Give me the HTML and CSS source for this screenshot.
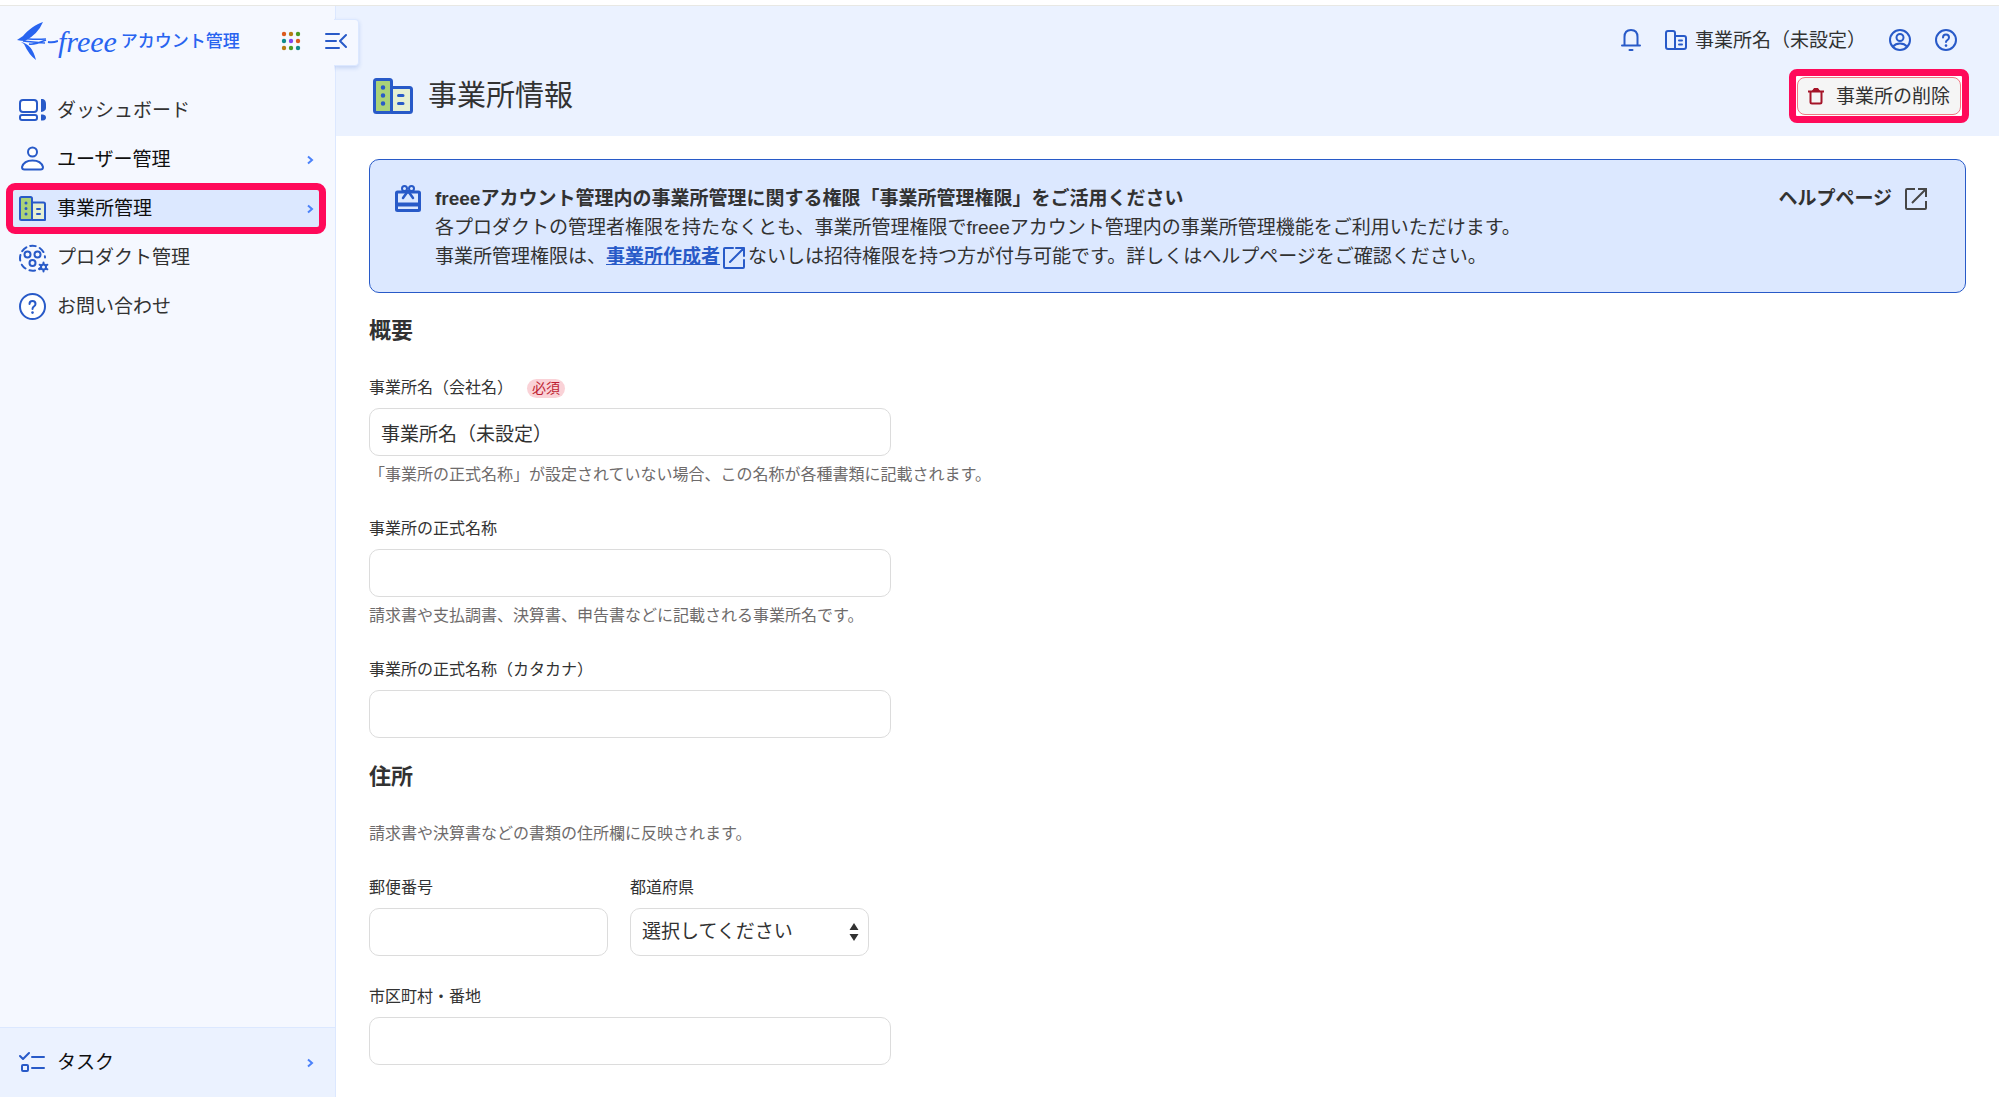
FILE: index.html
```html
<!DOCTYPE html>
<html lang="ja">
<head>
<meta charset="UTF-8">
<meta name="viewport" content="width=device-width, initial-scale=1">
<title>事業所情報 | freee アカウント管理</title>
<link rel="stylesheet" href="styles.css">
</head>
<body>
<div class="app">

<aside class="sidebar">
	<div class="brand">
		<a class="logo" href="#">
			<svg width="42" height="40" viewBox="0 0 42 40" aria-hidden="true">
				<path d="M27 1C20 3 12 9 7 15L1 19Q5 20 9 20Q22 13 27 1Z" fill="#2864f0"/>
				<path d="M5 21Q16 23 20 39Q13 34 8 23Z" fill="#2864f0"/>
				<path d="M7 17Q15 19 30 18M7 20Q16 21 29 22M13 23Q18 24 30 19" fill="none" stroke="#2864f0" stroke-width="1.5"/>
				<path d="M32 21Q37 22 42 20" fill="none" stroke="#2864f0" stroke-width="2"/>
			</svg>
			<span class="logo-word">freee</span>
			<span class="logo-name">アカウント管理</span>
		</a>
		<button class="icon-button apps" aria-label="アプリ一覧">
			<svg width="20" height="20" viewBox="0 0 20 20">
				<g fill="#dc5a1e"><circle cx="3" cy="3" r="2.2"/><circle cx="17" cy="10" r="2.2"/></g>
				<g fill="#b47d14"><circle cx="10" cy="3" r="2.2"/><circle cx="3" cy="17" r="2.2"/></g>
				<g fill="#4b9b23"><circle cx="17" cy="3" r="2.2"/><circle cx="10" cy="17" r="2.2"/></g>
				<g fill="#0f8c8c"><circle cx="3" cy="10" r="2.2"/><circle cx="17" cy="17" r="2.2"/></g>
				<circle cx="10" cy="10" r="2.2" fill="#8246f0"/>
			</svg>
		</button>
		<button class="icon-button toggle" aria-label="メニューを閉じる">
			<svg class="line" width="22" height="18" viewBox="0 0 22 18">
				<path d="M1 2H14M1 9H11M1 16H14M21 3L15 9L21 15"/>
			</svg>
		</button>
	</div>

	<nav class="menu">
		<a class="menu-item" href="#">
			<svg class="line" width="27" height="27" viewBox="0 0 27 27">
				<rect x="1" y="3" width="17" height="12" rx="3" fill="#fff"/>
				<rect x="1" y="18" width="17" height="5" rx="2" fill="#fff"/>
				<path class="solid" d="M22 2H24Q27 3 27 7V11Q27 14 22 15ZM22 17.500H24Q27 18 27 20.500T24 23.500H22Z"/>
			</svg>
			<span>ダッシュボード</span>
		</a>
		<a class="menu-item parent" href="#">
			<svg class="line" width="27" height="27" viewBox="0 0 27 27">
				<circle cx="13.500" cy="6" r="4.500" fill="#fff"/>
				<path d="M5.500 23.500H21.500Q24 23.500 24 21Q22 14.500 13.500 14.500T3 21Q3 23.500 5.500 23.500Z" fill="#fff"/>
			</svg>
			<span>ユーザー管理</span>
			<svg class="chevron" width="8" height="10" viewBox="0 0 8 10"><path d="M2 1.500L6 5L2 8.500"/></svg>
		</a>
		<a class="menu-item parent active" href="#">
			<svg class="line" width="27" height="27" viewBox="0 0 27 27">
				<rect x="1" y="2" width="12" height="23" rx="1.500" fill="#aad278"/>
				<path d="M13 7.500H24.500Q26 7.500 26 9V25H13Z" fill="#e6f0d2"/>
				<path d="M18 14H21M18 19H21"/>
				<path d="M7 8V8.100M7 13.500V13.600M7 19V19.100" stroke-width="3"/>
			</svg>
			<span>事業所管理</span>
			<svg class="chevron" width="8" height="10" viewBox="0 0 8 10"><path d="M2 1.500L6 5L2 8.500"/></svg>
		</a>
		<a class="menu-item" href="#">
			<svg class="line products" width="27" height="27" viewBox="0 0 27 27">
				<path d="M24 21A12.500 12.500 0 1 1 26 13.500" stroke-dasharray="5.500 4.300"/>
				<circle cx="8.500" cy="10.500" r="3"/>
				<circle cx="18.500" cy="10.500" r="3"/>
				<circle cx="13.500" cy="19" r="3"/>
				<path d="M24.500 18.500V27.500M20.600 20.700L28.400 25.300M28.400 20.700L20.600 25.300"/>
				<circle cx="24.500" cy="23" r="2.500" fill="#f5f8ff"/>
			</svg>
			<span>プロダクト管理</span>
		</a>
		<a class="menu-item" href="#">
			<svg class="line" width="27" height="27" viewBox="0 0 27 27">
				<circle cx="13.500" cy="13.500" r="12.500" fill="#fff"/>
				<path d="M10.500 11Q10.500 8 13.500 8T16.500 11Q16.500 12.500 15 13.300T13.500 16"/>
				<path d="M13.500 19.500V19.600" stroke-width="2.600"/>
			</svg>
			<span>お問い合わせ</span>
		</a>
	</nav>

	<a class="tasks parent" href="#">
		<svg class="line" width="27" height="27" viewBox="0 0 27 27">
			<path d="M1 7L4 10L10 4M13 8H25M13 19H25"/>
			<rect x="3" y="16" width="6" height="6" rx="1"/>
		</svg>
		<span>タスク</span>
		<svg class="chevron" width="8" height="10" viewBox="0 0 8 10"><path d="M2 1.500L6 5L2 8.500"/></svg>
	</a>
</aside>

<div class="page">
	<header class="page-header">
		<div class="topbar">
			<button class="icon-button" aria-label="お知らせ">
				<svg class="line" width="22" height="22" viewBox="0 0 22 22">
					<path d="M2 16.500H20M4.500 16.500V8Q4.500 1 11 1T17.500 8V16.500"/>
					<path d="M9.500 21H12.500"/>
				</svg>
			</button>
			<button class="office">
				<svg class="line" width="22" height="22" viewBox="0 0 22 22">
					<path d="M11 20H3Q1 20 1 18V4Q1 2 3 2H8Q10 2 10 4V20H19Q21 20 21 18V9Q21 7 19 7H10M14 11.500H17M14 15.500H17"/>
				</svg>
				<span>事業所名（未設定）</span>
			</button>
			<div class="topbar-icons">
				<button class="icon-button" aria-label="アカウント">
					<svg class="line" width="22" height="22" viewBox="0 0 22 22">
						<circle cx="11" cy="11" r="10"/>
						<circle cx="11" cy="8.500" r="3.500"/>
						<path d="M4 17.500Q6.500 14.500 11 14.500T18 17.500"/>
					</svg>
				</button>
				<button class="icon-button" aria-label="ヘルプ">
					<svg class="line" width="22" height="22" viewBox="0 0 22 22">
						<circle cx="11" cy="11" r="10"/>
						<path d="M8 8.500Q8 5.500 11 5.500T14 8.500Q14 10 12.500 11T11 13"/>
						<path d="M11 16.500V16.600" stroke-width="2.600"/>
					</svg>
				</button>
			</div>
		</div>
		<div class="title-row">
			<svg class="line title-icon" width="40" height="36" viewBox="0 0 40 36">
				<rect x="1.500" y="1.500" width="17" height="33" rx="2" fill="#aad278"/>
				<path d="M18.500 9.500H36.500Q38.500 9.500 38.500 11.500V32.500Q38.500 34.500 36.500 34.500H18.500Z" fill="#e6f0d2"/>
				<path d="M25.500 17.500H30M25.500 25.500H30"/>
				<path d="M10 9.500V9.600M10 17.500V17.600M10 25.500V25.600" stroke-width="4.500"/>
			</svg>
			<h1>事業所情報</h1>
			<div class="marked">
				<button class="delete">
					<svg width="16" height="18" viewBox="0 0 16 18" fill="none" stroke="#a51428" stroke-width="2">
						<path d="M0 4.500H16M2.500 4.500V15Q2.500 16.500 4 16.500H12Q13.500 16.500 13.500 15V4.500"/>
						<path d="M4.500 4L6 1.500H10L11.500 4Z" fill="#a51428" stroke-width="1"/>
					</svg>
					<span>事業所の削除</span>
				</button>
			</div>
		</div>
	</header>

	<main class="content">
		<section class="notice">
			<svg class="line" width="28" height="28" viewBox="0 0 28 28">
				<rect x="2.500" y="8" width="23" height="18.500" rx="1" stroke-width="3"/>
				<path d="M3 20.500H25" stroke-width="4"/>
				<path d="M9 14L14 7L19 14" stroke-width="2.500"/>
				<circle cx="10.500" cy="4.500" r="2.500" fill="#dce8ff"/>
				<circle cx="17.500" cy="4.500" r="2.500" fill="#dce8ff"/>
			</svg>
			<div class="notice-body">
				<strong>freeeアカウント管理内の事業所管理に関する権限「事業所管理権限」をご活用ください</strong>
				<p>各プロダクトの管理者権限を持たなくとも、事業所管理権限でfreeeアカウント管理内の事業所管理機能をご利用いただけます。</p>
				<p>事業所管理権限は、<a class="inline-link" href="#">事業所作成者</a><svg class="line external" width="24" height="24" viewBox="0 0 24 24"><path d="M11 2H3Q2 2 2 3V21Q2 22 3 22H21Q22 22 22 21V14M14 2H22V10M22 2L8 16"/></svg>ないしは招待権限を持つ方が付与可能です。詳しくはヘルプページをご確認ください。</p>
			</div>
			<a class="help-link" href="#">
				<span>ヘルプページ</span>
				<svg width="24" height="24" viewBox="0 0 24 24"><path d="M11 2H3Q2 2 2 3V21Q2 22 3 22H21Q22 22 22 21V14M14 2H22V10M22 2L8 16" fill="none" stroke="#464646" stroke-width="2"/></svg>
			</a>
		</section>

		<form>
			<h2>概要</h2>
			<div class="field">
				<div class="label-row">
					<label for="name">事業所名（会社名）</label>
					<span class="required">必須</span>
				</div>
				<input type="text" id="name" value="事業所名（未設定）">
				<p class="note">「事業所の正式名称」が設定されていない場合、この名称が各種書類に記載されます。</p>
			</div>
			<div class="field">
				<label for="official">事業所の正式名称</label>
				<input type="text" id="official">
				<p class="note">請求書や支払調書、決算書、申告書などに記載される事業所名です。</p>
			</div>
			<div class="field">
				<label for="kana">事業所の正式名称（カタカナ）</label>
				<input type="text" id="kana">
			</div>

			<h2>住所</h2>
			<p class="lead">請求書や決算書などの書類の住所欄に反映されます。</p>
			<div class="field-row">
				<div class="field">
					<label for="zip">郵便番号</label>
					<input type="text" id="zip">
				</div>
				<div class="field">
					<label for="pref">都道府県</label>
					<div class="select">
						<select id="pref">
							<option>選択してください</option>
						</select>
						<svg width="10" height="18" viewBox="0 0 10 18"><path d="M5 0L9.500 7H0.500ZM5 18L9.500 11H0.500Z" fill="#323232"/></svg>
					</div>
				</div>
			</div>
			<div class="field">
				<label for="city">市区町村・番地</label>
				<input type="text" id="city">
			</div>
		</form>
	</main>
</div>

</div>
</body>
</html>
```
FILE: styles.css
```css
* {
	box-sizing: border-box;
}

body {
	margin: 0;
	padding-top: 5px;
	background-color: #fff;
	color: #323232;
	font-family: "Liberation Sans", "Noto Sans CJK JP", sans-serif;
	font-size: 19px;
	line-height: 29px;
}

h1, h2, p {
	margin: 0;
}

a {
	color: inherit;
	text-decoration: none;
}

button, input, select {
	font: inherit;
	color: inherit;
}

button {
	padding: 0;
	border: none;
	background: none;
	cursor: pointer;
}

svg {
	flex: none;
	display: block;
}

.line {
	fill: none;
	stroke: #285ac8;
	stroke-width: 2;
	stroke-linecap: round;
	stroke-linejoin: round;
}

.line .solid {
	fill: #285ac8;
	stroke: none;
}

.icon-button {
	display: flex;
	align-items: center;
}

.app {
	display: flex;
	min-height: calc(100vh - 5px);
	border-top: 1px solid #e8e8e4;
}

/* Sidebar */
.sidebar {
	position: relative;
	z-index: 1;
	display: flex;
	flex: none;
	flex-direction: column;
	width: 336px;
	border-right: 1px solid #dce8ff;
	background-color: #f5f8ff;
}

.brand {
	display: flex;
	align-items: center;
	height: 70px;
	padding-left: 16px;
}

.logo {
	display: flex;
	align-items: center;
	color: #2864f0;
}

.logo-word {
	font-family: "Liberation Serif", serif;
	font-size: 30px;
	font-style: italic;
}

.logo-name {
	margin-left: 4px;
	font-size: 17px;
	font-weight: 500;
}

.apps {
	margin-left: auto;
}

.toggle {
	position: relative;
	width: 34px;
	height: 45px;
	margin-left: 24px;
	margin-right: -24px;
}

.toggle svg {
	position: relative;
	z-index: 1;
}

/* part of the toggle that sticks out of the sidebar */
.toggle::after {
	content: "";
	position: absolute;
	top: 0;
	right: 0;
	width: 24px;
	height: 45px;
	border: 1px solid #dce8ff;
	border-left: none;
	border-radius: 0 4px 4px 0;
	background-color: #f5f8ff;
	box-shadow: 0 2px 4px rgba(40, 90, 200, 0.2);
	clip-path: inset(-8px -8px -8px 0);
}

.menu {
	display: flex;
	flex-direction: column;
	gap: 12px;
	padding: 16px 16px 24px 13px;
}

.menu-item, .tasks {
	display: flex;
	align-items: center;
	gap: 11px;
}

.menu-item {
	height: 37px;
	padding: 0 5px 0 6px;
}

.parent {
	color: #0f0f0f;
}

.active {
	border-radius: 2px;
	background-color: #dce8ff;
	outline: 7px solid #ff0a5a;
}

.products {
	overflow: visible;
}

.chevron {
	margin-left: auto;
	fill: none;
	stroke: #4b82fa;
	stroke-width: 2;
}

.tasks {
	height: 70px;
	margin-top: auto;
	padding: 0 21px 0 19px;
	border-top: 1px solid #dce8ff;
	background-color: #ebf2ff;
}

/* Page header */
.page {
	flex: 1;
	min-width: 0;
}

.page-header {
	padding: 13px 30px 13px 37px;
	background-color: #ebf2ff;
}

.topbar {
	display: flex;
	align-items: center;
	justify-content: flex-end;
	gap: 23px;
	height: 42px;
	margin: 0 12px 8px 0;
}

.topbar-icons {
	display: flex;
	gap: 24px;
}

.office {
	display: flex;
	align-items: center;
	gap: 8px;
}

.title-row {
	display: flex;
	align-items: center;
	gap: 15px;
}

.title-icon {
	stroke-width: 3;
}

h1 {
	font-size: 29px;
	font-weight: normal;
	line-height: 40px;
}

.marked {
	margin-left: auto;
	padding: 1px;
	border: 7px solid #ff0a5a;
	border-radius: 8px;
	background-color: #fff;
}

.delete {
	display: flex;
	align-items: center;
	gap: 12px;
	height: 38px;
	padding: 0 10px;
	border: 1px solid #f07882;
	border-radius: 8px;
	background-color: #f5f5f5;
}

/* Content */
.content {
	padding: 23px 33px 0;
}

.notice {
	display: flex;
	align-items: flex-start;
	gap: 13px;
	margin-bottom: 22px;
	padding: 24px 37px 21px 24px;
	border: 1px solid #285ac8;
	border-radius: 10px;
	background-color: #dce8ff;
}

.notice-body {
	flex: 1;
}

.notice-body strong {
	display: block;
}

.inline-link {
	color: #285ac8;
	font-weight: bold;
	text-decoration: underline;
}

.external {
	display: inline-block;
	margin: 0 2px;
	vertical-align: middle;
}

.help-link {
	display: flex;
	align-items: center;
	gap: 12px;
	font-weight: bold;
}

h2 {
	font-size: 22px;
	line-height: 32px;
	margin-bottom: 29px;
}

.field {
	margin-bottom: 29px;
	font-size: 16px;
	line-height: 24px;
}

.field label {
	display: block;
}

.label-row {
	display: flex;
	align-items: center;
	gap: 14px;
}

.required {
	padding: 0 5px;
	border-radius: 10px;
	background-color: #fad2d7;
	color: #be1e32;
	font-size: 14px;
	line-height: 19px;
}

.field input, .field select {
	display: block;
	width: 100%;
	max-width: 522px;
	height: 48px;
	margin-top: 8px;
	padding: 0 11px;
	border: 1px solid #dcdcdc;
	border-radius: 10px;
	background-color: #fff;
	font-size: 19px;
}

.field select {
	appearance: none;
}

.select {
	position: relative;
}

.select svg {
	position: absolute;
	top: 15px;
	right: 10px;
	pointer-events: none;
}

.note {
	margin: 7px 0 30px;
}

.note, .lead {
	color: #6e6b6b;
}

.lead {
	margin-bottom: 30px;
	font-size: 16px;
	line-height: 24px;
}

.field + h2 {
	margin-top: -6px;
}

.field-row {
	display: flex;
	gap: 22px;
}

.field-row .field {
	width: 239px;
}
```
